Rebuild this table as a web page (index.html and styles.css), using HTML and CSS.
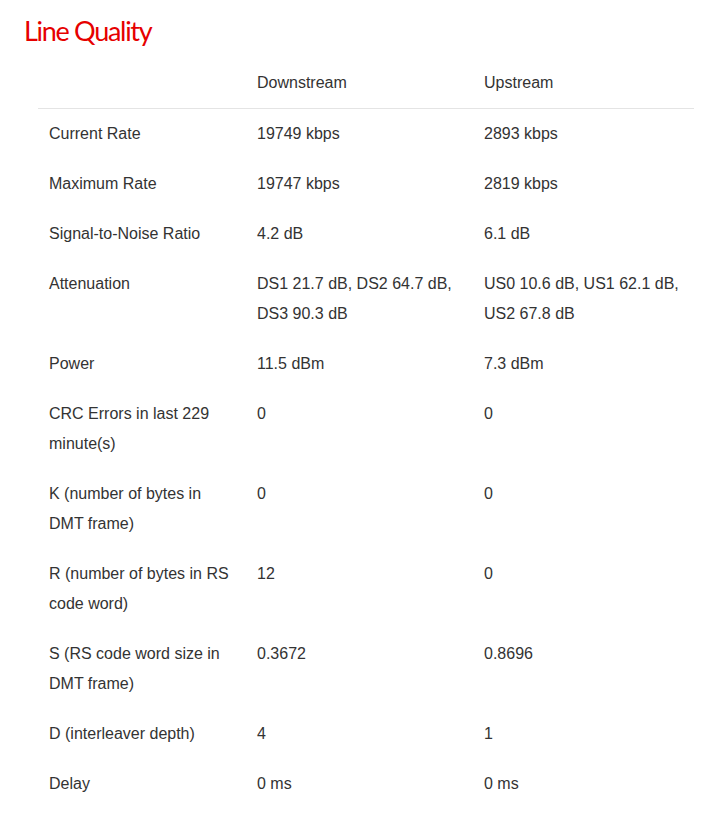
FILE: index.html
```html
<!DOCTYPE html>
<html>
<head>
<meta charset="utf-8">
<link rel="stylesheet" href="styles.css">
</head>
<body>
<div class="page">
  <h1 class="title">Line Quality</h1>
  <table class="lq">
    <colgroup>
      <col class="c1"><col class="c2"><col class="c3">
    </colgroup>
    <thead>
      <tr><th></th><th>Downstream</th><th>Upstream</th></tr>
    </thead>
    <tbody>
      <tr><td>Current Rate</td><td>19749 kbps</td><td>2893 kbps</td></tr>
      <tr><td>Maximum Rate</td><td>19747 kbps</td><td>2819 kbps</td></tr>
      <tr><td>Signal-to-Noise Ratio</td><td>4.2 dB</td><td>6.1 dB</td></tr>
      <tr><td>Attenuation</td><td>DS1 21.7 dB, DS2 64.7 dB, DS3 90.3 dB</td><td>US0 10.6 dB, US1 62.1 dB, US2 67.8 dB</td></tr>
      <tr><td>Power</td><td>11.5 dBm</td><td>7.3 dBm</td></tr>
      <tr><td>CRC Errors in last 229 minute(s)</td><td>0</td><td>0</td></tr>
      <tr><td>K (number of bytes in DMT frame)</td><td>0</td><td>0</td></tr>
      <tr><td>R (number of bytes in RS code word)</td><td>12</td><td>0</td></tr>
      <tr><td>S (RS code word size in DMT frame)</td><td>0.3672</td><td>0.8696</td></tr>
      <tr><td>D (interleaver depth)</td><td>4</td><td>1</td></tr>
      <tr><td>Delay</td><td>0 ms</td><td>0 ms</td></tr>
    </tbody>
  </table>
</div>
</body>
</html>
```
FILE: styles.css
```css
html, body {
  margin: 0;
  padding: 0;
  background: #ffffff;
}
.page {
  padding: 15px 28px 0 24px;
}
.title {
  margin: 0 0 11px 0;
  font-family: Lato, "Open Sans", sans-serif;
  font-weight: 400;
  font-size: 27px;
  line-height: 32px;
  color: #e60000;
  letter-spacing: -1.3px;
}
.lq {
  margin-left: 14px;
  width: 656px;
  border-collapse: collapse;
  table-layout: fixed;
  font-family: "Liberation Sans", Arial, sans-serif;
  font-size: 16px;
  line-height: 30px;
  color: #333333;
}
.c1 { width: 208px; }
.c2 { width: 227px; }
.c3 { width: 221px; }
.lq th, .lq td {
  text-align: left;
  vertical-align: top;
  padding: 10px 10px 10px 11px;
  font-weight: 400;
}
.lq thead th {
  border-bottom: 1px solid #e4e4e4;
}
```
